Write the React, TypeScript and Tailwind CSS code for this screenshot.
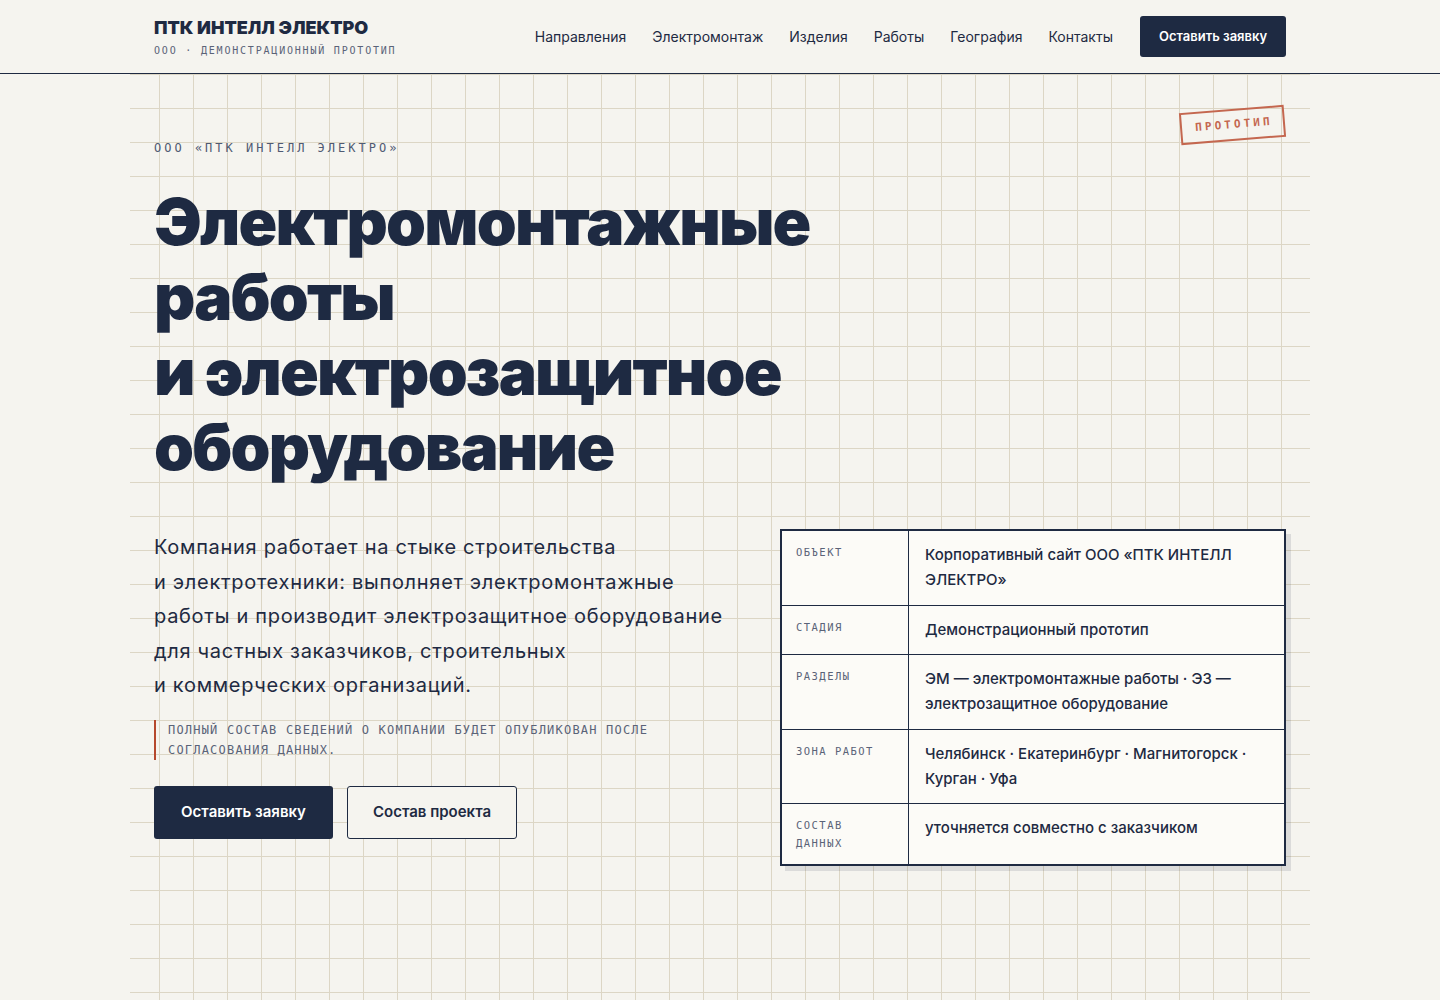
import React from "react";

const navItems = ["Направления", "Электромонтаж", "Изделия", "Работы", "География", "Контакты"];

const rows: { label: string[]; value: React.ReactNode }[] = [
  { label: ["ОБЪЕКТ"], value: <>Корпоративный сайт ООО «ПТК ИНТЕЛЛ<br />ЭЛЕКТРО»</> },
  { label: ["СТАДИЯ"], value: "Демонстрационный прототип" },
  { label: ["РАЗДЕЛЫ"], value: <>ЭМ — электромонтажные работы · ЭЗ —<br />электрозащитное оборудование</> },
  { label: ["ЗОНА РАБОТ"], value: <>Челябинск · Екатеринбург · Магнитогорск ·<br />Курган · Уфа</> },
  { label: ["СОСТАВ", "ДАННЫХ"], value: "уточняется совместно с заказчиком" },
];

function Header() {
  return (
    <header className="border-b border-[#1e2a42] bg-[#f5f4ef]">
      <div className="mx-auto flex h-[73px] w-[1180px] items-center justify-between px-6">
        <div className="flex flex-col pt-[1px]">
          <div className="font-['Inter',sans-serif] text-[18px] font-black leading-[22px] text-[#1e2a42]">
            ПТК ИНТЕЛЛ ЭЛЕКТРО
          </div>
          <div className="mt-[5px] font-['DejaVu_Sans_Mono',monospace] text-[10px] leading-[14px] tracking-[0.18em] text-[#5a6378]">
            ООО · ДЕМОНСТРАЦИОННЫЙ ПРОТОТИП
          </div>
        </div>
        <nav className="flex items-center gap-[26px] font-['Inter',sans-serif] text-[14px] text-[#1e2a42]">
          {navItems.map((item) => (
            <a key={item} href="#" className="leading-5">
              {item}
            </a>
          ))}
          <button className="ml-[1px] flex h-[41px] w-[146px] items-center justify-center rounded-[3px] bg-[#1e2a42] text-[13px] font-semibold text-white">
            Оставить заявку
          </button>
        </nav>
      </div>
    </header>
  );
}

function InfoTable() {
  return (
    <div className="border-2 border-[#1e2a42] bg-[#fcfbf7] shadow-[5px_5px_0_rgba(30,42,66,0.12)]">
      {rows.map((row, i) => (
        <div
          key={i}
          className={`grid grid-cols-[127px_1fr] ${i > 0 ? "border-t border-[#1e2a42]" : ""}`}
        >
          <div className="border-r border-[#1e2a42] px-[14px] py-3 font-['DejaVu_Sans_Mono',monospace] text-[10.5px] leading-[18px] tracking-[0.14em] text-[#5a6378]">
            {row.label.map((l) => (
              <div key={l}>{l}</div>
            ))}
          </div>
          <div className="px-4 py-3 font-['Inter',sans-serif] text-[15px] font-medium leading-[24.75px] text-[#1e2a42]">
            {row.value}
          </div>
        </div>
      ))}
    </div>
  );
}

export default function App() {
  return (
    <div className="min-h-[1000px] bg-[#f5f4ef] font-['Inter',sans-serif]">
      <Header />
      <main className="relative mx-auto min-h-[926px] w-[1180px] bg-[linear-gradient(to_right,#dcd6c5_1px,transparent_1px),linear-gradient(to_bottom,#dcd6c5_1px,transparent_1px)] bg-[size:34px_34px] bg-[position:29px_0] px-6 pt-[66px]">
        {/* rubber stamp */}
        <div className="absolute right-[25px] top-[35px] flex h-[32px] w-[105px] rotate-[-4.6deg] items-center justify-center border-2 border-[#c4674f] pl-[3px] font-['DejaVu_Sans_Mono',monospace] text-[11px] font-bold tracking-[0.28em] text-[#c4674f]">
          ПРОТОТИП
        </div>

        <div className="font-['DejaVu_Sans_Mono',monospace] text-[12px] leading-4 tracking-[0.25em] text-[#4f5a73]">
          ООО «ПТК ИНТЕЛЛ ЭЛЕКТРО»
        </div>

        <h1 className="mt-[28px] text-[64px] font-black leading-[75px] tracking-[-0.028em] text-[#1e2a42]">
          Электромонтажные
          <br />
          работы
          <br />
          и электрозащитное
          <br />
          оборудование
        </h1>

        <div className="mt-[46px] grid grid-cols-[1fr_506px] gap-14">
          <div>
            <p className="whitespace-nowrap text-[20px] leading-[34.5px] tracking-[0.035em] text-[#1e2a42]">
              Компания работает на стыке строительства
              <br />
              и электротехники: выполняет электромонтажные
              <br />
              работы и производит электрозащитное оборудование
              <br />
              для частных заказчиков, строительных
              <br />
              и коммерческих организаций.
            </p>
            <div className="mt-[17px] border-l-2 border-[#b5482d] pl-3 font-['DejaVu_Sans_Mono',monospace] text-[12px] leading-5 tracking-[0.1em] text-[#5a6378]">
              ПОЛНЫЙ СОСТАВ СВЕДЕНИЙ О КОМПАНИИ БУДЕТ ОПУБЛИКОВАН ПОСЛЕ
              <br />
              СОГЛАСОВАНИЯ ДАННЫХ.
            </div>
            <div className="mt-[26px] flex gap-[14px]">
              <button className="flex h-[53px] w-[179px] items-center justify-center rounded-[3px] bg-[#1e2a42] text-[15px] font-semibold text-white">
                Оставить заявку
              </button>
              <button className="flex h-[53px] w-[170px] items-center justify-center rounded-[3px] border border-[#1e2a42] bg-[#f5f4ef] text-[15px] font-semibold text-[#1e2a42]">
                Состав проекта
              </button>
            </div>
          </div>
          <div className="-mt-[1px]">
            <InfoTable />
          </div>
        </div>
      </main>
    </div>
  );
}
